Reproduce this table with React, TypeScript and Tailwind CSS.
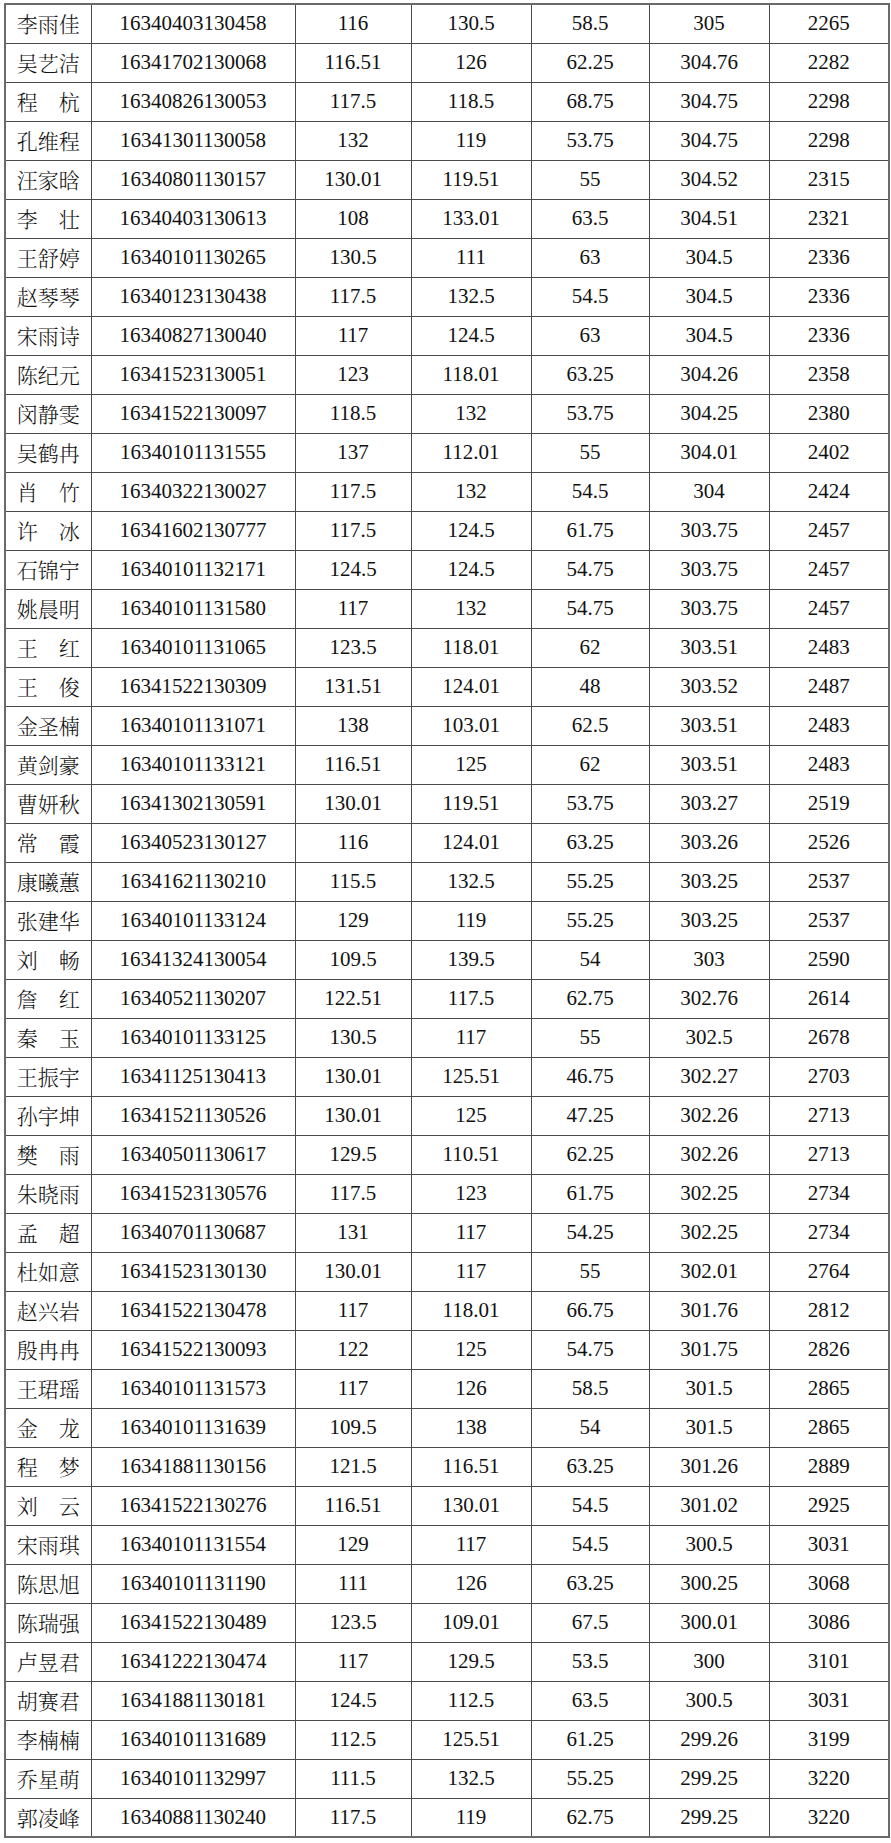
import React from 'react';

const rows: [string, string, string, string, string, string, string][] = [
  ['李雨佳', '16340403130458', '116', '130.5', '58.5', '305', '2265'],
  ['吴艺洁', '16341702130068', '116.51', '126', '62.25', '304.76', '2282'],
  ['程　杭', '16340826130053', '117.5', '118.5', '68.75', '304.75', '2298'],
  ['孔维程', '16341301130058', '132', '119', '53.75', '304.75', '2298'],
  ['汪家晗', '16340801130157', '130.01', '119.51', '55', '304.52', '2315'],
  ['李　壮', '16340403130613', '108', '133.01', '63.5', '304.51', '2321'],
  ['王舒婷', '16340101130265', '130.5', '111', '63', '304.5', '2336'],
  ['赵琴琴', '16340123130438', '117.5', '132.5', '54.5', '304.5', '2336'],
  ['宋雨诗', '16340827130040', '117', '124.5', '63', '304.5', '2336'],
  ['陈纪元', '16341523130051', '123', '118.01', '63.25', '304.26', '2358'],
  ['闵静雯', '16341522130097', '118.5', '132', '53.75', '304.25', '2380'],
  ['吴鹤冉', '16340101131555', '137', '112.01', '55', '304.01', '2402'],
  ['肖　竹', '16340322130027', '117.5', '132', '54.5', '304', '2424'],
  ['许　冰', '16341602130777', '117.5', '124.5', '61.75', '303.75', '2457'],
  ['石锦宁', '16340101132171', '124.5', '124.5', '54.75', '303.75', '2457'],
  ['姚晨明', '16340101131580', '117', '132', '54.75', '303.75', '2457'],
  ['王　红', '16340101131065', '123.5', '118.01', '62', '303.51', '2483'],
  ['王　俊', '16341522130309', '131.51', '124.01', '48', '303.52', '2487'],
  ['金圣楠', '16340101131071', '138', '103.01', '62.5', '303.51', '2483'],
  ['黄剑豪', '16340101133121', '116.51', '125', '62', '303.51', '2483'],
  ['曹妍秋', '16341302130591', '130.01', '119.51', '53.75', '303.27', '2519'],
  ['常　霞', '16340523130127', '116', '124.01', '63.25', '303.26', '2526'],
  ['康曦蕙', '16341621130210', '115.5', '132.5', '55.25', '303.25', '2537'],
  ['张建华', '16340101133124', '129', '119', '55.25', '303.25', '2537'],
  ['刘　畅', '16341324130054', '109.5', '139.5', '54', '303', '2590'],
  ['詹　红', '16340521130207', '122.51', '117.5', '62.75', '302.76', '2614'],
  ['秦　玉', '16340101133125', '130.5', '117', '55', '302.5', '2678'],
  ['王振宇', '16341125130413', '130.01', '125.51', '46.75', '302.27', '2703'],
  ['孙宇坤', '16341521130526', '130.01', '125', '47.25', '302.26', '2713'],
  ['樊　雨', '16340501130617', '129.5', '110.51', '62.25', '302.26', '2713'],
  ['朱晓雨', '16341523130576', '117.5', '123', '61.75', '302.25', '2734'],
  ['孟　超', '16340701130687', '131', '117', '54.25', '302.25', '2734'],
  ['杜如意', '16341523130130', '130.01', '117', '55', '302.01', '2764'],
  ['赵兴岩', '16341522130478', '117', '118.01', '66.75', '301.76', '2812'],
  ['殷冉冉', '16341522130093', '122', '125', '54.75', '301.75', '2826'],
  ['王珺瑶', '16340101131573', '117', '126', '58.5', '301.5', '2865'],
  ['金　龙', '16340101131639', '109.5', '138', '54', '301.5', '2865'],
  ['程　梦', '16341881130156', '121.5', '116.51', '63.25', '301.26', '2889'],
  ['刘　云', '16341522130276', '116.51', '130.01', '54.5', '301.02', '2925'],
  ['宋雨琪', '16340101131554', '129', '117', '54.5', '300.5', '3031'],
  ['陈思旭', '16340101131190', '111', '126', '63.25', '300.25', '3068'],
  ['陈瑞强', '16341522130489', '123.5', '109.01', '67.5', '300.01', '3086'],
  ['卢昱君', '16341222130474', '117', '129.5', '53.5', '300', '3101'],
  ['胡赛君', '16341881130181', '124.5', '112.5', '63.5', '300.5', '3031'],
  ['李楠楠', '16340101131689', '112.5', '125.51', '61.25', '299.26', '3199'],
  ['乔星萌', '16340101132997', '111.5', '132.5', '55.25', '299.25', '3220'],
  ['郭凌峰', '16340881130240', '117.5', '119', '62.75', '299.25', '3220'],
];

export default function App() {
  return (
    <div className="min-h-screen bg-white pl-[4px] pt-[3px]">
      <table className="table-fixed border-collapse border-2 border-[#6a6a6a] text-[#111] w-[884px]">
        <colgroup>
          <col className="w-[86px]" />
          <col className="w-[204px]" />
          <col className="w-[116px]" />
          <col className="w-[120px]" />
          <col className="w-[118px]" />
          <col className="w-[120px]" />
          <col className="w-[120px]" />
        </colgroup>
        <tbody>
          {rows.map((r, i) => (
            <tr key={i} className="h-[39px]">
              <td className="border border-[#4a4a4a] p-0 text-center text-[21px] leading-none font-['Noto_Serif_CJK_SC','Noto_Sans_CJK_SC',serif] font-light">
                {r[0]}
              </td>
              {r.slice(1).map((c, j) => (
                <td
                  key={j}
                  className="border border-[#4a4a4a] p-0 text-center text-[21px] leading-none font-['Liberation_Serif',serif]"
                >
                  {c}
                </td>
              ))}
            </tr>
          ))}
        </tbody>
      </table>
    </div>
  );
}
